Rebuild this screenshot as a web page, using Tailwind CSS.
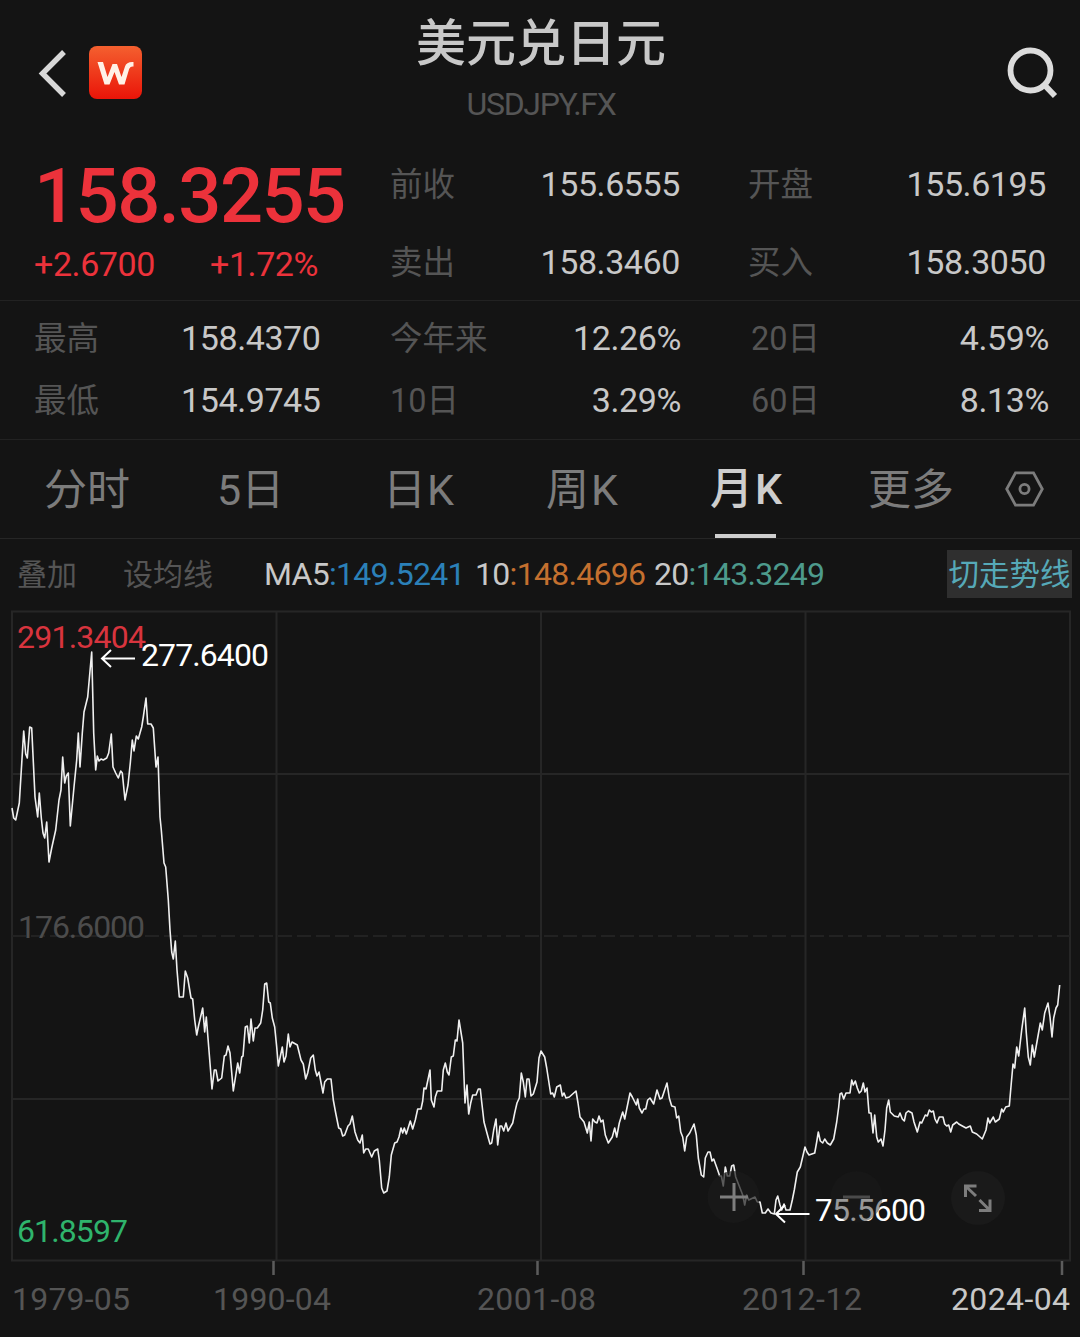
<!DOCTYPE html>
<html lang="zh-CN">
  <head>
    <meta charset="UTF-8" />
    <meta name="viewport" content="width=device-width, initial-scale=1.0" />
    <script src="https://cdn.jsdelivr.net/npm/@tailwindcss/browser@4"></script>
    <title>美元兑日元 USDJPY.FX</title>
  </head>
  <body class="bg-[#141414] w-[1080px] h-[1337px] overflow-hidden text-[#c8c8c8] whitespace-nowrap font-[Roboto,'Noto_Sans_CJK_SC',sans-serif]">
    <!-- Header -->
    <header class="h-[145px] grid grid-cols-[1fr_auto_1fr]">
      <div class="flex items-center h-[145px] pl-[38px] gap-[23px]">
        <svg class="w-7 h-12" viewBox="0 0 28 48" fill="none" stroke="#d8d8d8" stroke-width="5.400">
          <path d="M26 3 L4.500 24.500 L26 46" />
        </svg>
        <svg class="w-[53px] h-[53px]" viewBox="0 0 53 53">
          <defs>
            <linearGradient id="logo" x1="0" y1="0" x2="0" y2="1">
              <stop offset="0" stop-color="#f4602f" />
              <stop offset="1" stop-color="#ea1408" />
            </linearGradient>
          </defs>
          <rect width="53" height="53" rx="8" fill="url(#logo)" />
          <path d="M8.500 16 H14 L18.500 31 L23.500 18 H28 L32.500 31 L36 20.500 Q37.500 15.500 44.500 16 V20.500 Q41 20 40 23.500 L35.500 38.500 H30 L25.500 26 L20.500 38.500 H15.500 Z" fill="#fff1e6" />
        </svg>
      </div>
      <div class="text-center">
        <h1 class="text-[50px] leading-[60px] font-medium pt-[14px] pl-[2px]">美元兑日元</h1>
        <p class="text-[32px] leading-[40px] tracking-[-1.3px] text-[#555] mt-[10px] pl-[2px]">USDJPY.FX</p>
      </div>
      <div class="flex items-center justify-end h-[146px] pr-[21px]">
        <svg class="w-[52px] h-[52px]" viewBox="0 0 52 52" fill="none" stroke="#dcdcdc" stroke-width="5.800">
          <circle cx="23.500" cy="23.500" r="20" />
          <path d="M37.500 38 L48 49" />
        </svg>
      </div>
    </header>

    <!-- Quote -->
    <section class="h-[156px] flex border-b border-[#222]">
      <div class="w-[390px] pl-[34px] text-[#ec323b]">
        <div class="text-[76px] leading-[80px] tracking-[-1.6px] font-medium pt-[11px]">158.3255</div>
        <div class="flex text-[34px] leading-[40px] tracking-[-0.4px] pt-2">
          <span class="w-[176px]">+2.6700</span>
          <span>+1.72%</span>
        </div>
      </div>
      <div class="text-[34px] leading-[78px] tracking-[-0.4px]">
        <div class="flex h-[78px]">
          <span class="w-[150px] pt-px text-[32.500px] text-[#555] tracking-normal">前收</span>
          <span class="w-[140px] text-right">155.6555</span>
          <span class="w-[150px] pt-px ml-[68px] text-[32.500px] text-[#555] tracking-normal">开盘</span>
          <span class="w-[148px] text-right">155.6195</span>
        </div>
        <div class="flex h-[77px]">
          <span class="w-[150px] pt-px text-[32.500px] text-[#555] tracking-normal">卖出</span>
          <span class="w-[140px] text-right">158.3460</span>
          <span class="w-[150px] pt-px ml-[68px] text-[32.500px] text-[#555] tracking-normal">买入</span>
          <span class="w-[148px] text-right">158.3050</span>
        </div>
      </div>
    </section>

    <section class="h-[139px] pt-[7px] pl-[34px] border-b border-[#222] text-[34px] leading-[61px] tracking-[-0.4px]">
      <div class="flex">
        <span class="w-[147px] pt-px text-[32.500px] text-[#555] tracking-normal">最高</span>
        <span class="w-[138px] text-right">158.4370</span>
        <span class="w-[150px] pt-px ml-[71px] text-[32.500px] text-[#555] tracking-normal">今年来</span>
        <span class="w-[141px] text-right">12.26%</span>
        <span class="w-[150px] pt-px ml-[70px] text-[32.500px] text-[#555] tracking-normal">20日</span>
        <span class="w-[148px] text-right">4.59%</span>
      </div>
      <div class="flex">
        <span class="w-[147px] pt-px text-[32.500px] text-[#555] tracking-normal">最低</span>
        <span class="w-[138px] text-right">154.9745</span>
        <span class="w-[150px] pt-px ml-[71px] text-[32.500px] text-[#555] tracking-normal">10日</span>
        <span class="w-[141px] text-right">3.29%</span>
        <span class="w-[150px] pt-px ml-[70px] text-[32.500px] text-[#555] tracking-normal">60日</span>
        <span class="w-[148px] text-right">8.13%</span>
      </div>
    </section>

    <!-- Period tabs -->
    <nav class="h-[99px] flex items-center pl-[44px] border-b border-[#262626] text-[43px] leading-[98px] text-[#7c7c7c]">
      <span class="w-[173px] pt-px">分时</span>
      <span class="w-[166px] pt-px">5日</span>
      <span class="w-[163px] pt-px tracking-[1px]">日K</span>
      <span class="w-[164px] pt-px tracking-[2px]">周K</span>
      <span class="w-[158px] relative font-medium tracking-[2px] text-[#cecece]">
        月K
        <i class="absolute left-[5px] bottom-0 w-[61px] h-1 bg-[#cecece]"></i>
      </span>
      <span class="w-[137px] pt-px">更多</span>
      <svg class="w-[39px] h-[36px]" viewBox="0 0 39 36" fill="none" stroke="#7c7c7c" stroke-width="2.800">
        <path d="M10.500 1.800 H28.500 L37.300 18 L28.500 34.200 H10.500 L1.700 18 Z" />
        <circle cx="19.500" cy="18" r="4.600" />
      </svg>
    </nav>

    <!-- Moving averages -->
    <div class="h-[70px] flex items-center pl-[17px] pr-2 text-[30px] leading-[48px] text-[#555]">
      <span class="w-[106px] pt-[2px]">叠加</span>
      <span class="w-[141px] pt-[2px]">设均线</span>
      <div class="text-[32px] tracking-[-0.7px] flex">
        <span class="w-[211px] text-[#2b80b8]"><b class="font-normal text-[#c8c8c8]">MA5</b>:149.5241</span>
        <span class="w-[179px] text-[#c4702f]"><b class="font-normal text-[#c8c8c8]">10</b>:148.4696</span>
        <span class="text-[#4d9a8c]"><b class="font-normal text-[#c8c8c8]">20</b>:143.3249</span>
      </div>
      <button class="ml-auto w-[125px] h-[48px] pt-px bg-[#2f2f2f] text-[#56a9b8] text-[30.500px]">切走势线</button>
    </div>

    <!-- Monthly chart -->
    <svg class="block w-[1080px] h-[728px]" viewBox="0 609 1080 728" font-size="32">
      <g fill="none" stroke="#262626" stroke-width="2">
        <rect x="12" y="611.500" width="1058" height="649" />
        <path d="M276.500 611V1260M541 611V1260M805.500 611V1260M12 774H1070M12 1099H1070" />
        <path d="M12 936H1070" stroke="#222" stroke-dasharray="14 5" />
      </g>
      <path d="M273.500 1261V1275M537.500 1261V1275M803.500 1261V1275M1062 1261V1275" stroke="#5c5c5c" stroke-width="2.500" />

      <g>
        <text x="17" y="648" textLength="129" fill="#d8343e">291.3404</text>
        <text x="18" y="938" textLength="127" fill="#4c4c4c">176.6000</text>
        <text x="17" y="1242" textLength="111" fill="#2fb46c">61.8597</text>
      </g>

      <polyline fill="none" stroke="#f0f0f0" stroke-width="1.600" stroke-linejoin="round" points="12,808 13.7,818 15.7,820 19.3,803 23.7,731 25.7,754 27.3,758 29.7,727 31.7,728 35,797 37.7,817 39.3,793 41.3,818 43,833 44.7,838 46.7,822 49,862 51.7,848 55.7,830 59,800 61,790 62.7,757 64.7,783 66.3,776 68.3,773 70.3,826 74,787 76.7,760 78.3,733 80,767 82.3,733 84,712 87.7,697 91.7,652 93.7,733 95.7,770 97.3,756 99,761 101,759 103.3,760 106.7,758 108.7,753 111.3,734 113,767 115.7,773 118.3,778 120.7,771 122.3,773 125,800 128,785 130.3,763 132.3,740 134,751 136.3,736 138.3,739 141.7,727 143.3,717 146,698 147.7,724 151,724 153.3,728 156,767 158,757 160,817 161.3,830 164,863 165.7,867 168.3,900 170,930 171.7,952 173.3,959 175.3,941 177,970 179.3,997 183.3,997 185.3,971 187.7,978 191,998 192.7,999 194.7,1020 196.7,1035 198.7,1025 202.7,1008 204.7,1032 206.3,1017 208.7,1047 210.3,1067 212,1089 214.3,1070 216,1070 218,1081 221.7,1078 224.3,1056 226,1055 228,1046 230,1053 233.3,1091 237.7,1063 239.7,1073 241.7,1057 243,1056 245.3,1027 247.3,1026 249.3,1043 251,1019 253.3,1041 255,1028 257.3,1028 260.7,1023 262.7,1010 264.7,984 266.7,983 268.7,1002 270.3,1003 272.3,1018 274.7,1027 276.7,1047 278.3,1066 282.3,1047 284,1062 286,1056 288.3,1034 290,1047 292,1042 297.3,1045 301,1060 303.3,1064 305.7,1079 307.7,1073 310.7,1058 313.3,1055 315.3,1070 317,1076 319,1072 323,1093 324.7,1082 327.3,1079 331,1079 333.3,1100 335.7,1113 338.7,1128 340.7,1129 342.7,1136 344.7,1135 348,1126 350,1124 352.3,1116 355,1132 357.7,1140 360,1143 362.3,1135 363.7,1153 365.7,1149 368.3,1149 371.7,1157 374.3,1151 377.7,1149 379.3,1160 381.7,1188 383.7,1193 387,1191 389.3,1177 391.3,1155 394.7,1143 397,1142 399,1137 401,1128 402.7,1133 404.3,1128 406.3,1134 410.3,1121 412.7,1129 415.3,1120 417.7,1109 421,1109 422.7,1101 424,1088 426,1089 430,1070 431.3,1100 434,1107 435.3,1097 437.3,1091 441.7,1091 443.3,1070 445.3,1063 447.3,1072 449,1075 451.3,1057 453.3,1056 455.3,1040 457,1041 459,1020 462.7,1043 464,1077 465,1103 467,1085 468.7,1114 470.7,1103 472.7,1095 476,1095 478.3,1089 480.3,1089 481.7,1102 484,1122 488.3,1138 490,1144 491.7,1143 493.7,1130 496,1119 497.7,1145 500,1126 501.7,1126 503.7,1131 506,1123 508,1131 512.7,1123 514.7,1113 517,1103 519.3,1098 521.3,1073 523.3,1082 525.3,1097 527,1079 529,1079 531,1096 533.3,1094 537,1082 539,1058 541,1051 544.7,1057 546.7,1068 550.7,1094 552.7,1093 554.3,1097 556.7,1087 560.3,1085 562.3,1096 564,1093 566,1098 569.3,1097 576,1091 578,1103 580,1117 584,1122 587.3,1133 589.3,1122 591,1141 592.7,1119 595,1122 597,1123 599,1116 601,1122 603,1120 605.3,1135 608.3,1143 612.3,1137 614.7,1128 616.7,1137 619.3,1123 622.7,1112 624.7,1119 630,1093 632.3,1097 636.3,1105 637.7,1099 639.3,1108 642,1113 644,1109 645.7,1109 647.7,1100 650,1098 653.7,1104 657,1090 660,1099 662,1098 667,1083 669.3,1098 671.7,1106 675,1107 676.7,1118 678.7,1116 680.7,1132 682.7,1137 684.7,1151 686.7,1137 689.7,1133 694,1124 696.3,1135 698.3,1158 701.3,1175 703.7,1177 705.3,1158 708,1152 710,1152 712,1161 713.7,1159 717.3,1169 719.7,1176 721.3,1176 723.3,1186 725.3,1167 727.3,1176 729.7,1176 731.7,1166 733.7,1165 735.7,1177 740,1188 742.7,1195 744.7,1205 746.7,1195 748.7,1200 755,1197 757.3,1202 760,1202 762.3,1213 765.3,1213 768,1209 771,1213 774.3,1214 776,1200 777.7,1196 780,1205 781.7,1210 784,1204 786,1210 790,1210 792.3,1200 794.3,1190 797.3,1172 800.3,1167 805,1147 807,1152 809,1155 814.7,1153 816.7,1142 818.3,1132 820.3,1141 822.7,1143 824.7,1139 827.3,1143 830.3,1145 833.7,1139 836.7,1122 838.7,1107 840,1094 841.7,1093 843.7,1099 846,1093 850,1093 851.7,1080 853.3,1085 855.3,1081 857.3,1088 859.3,1093 861.3,1091 863.3,1083 865,1092 867,1088 869,1113 871,1113 873,1133 874.7,1115 876.7,1137 878.3,1142 881,1139 883,1146 885,1130 886.7,1108 888.7,1100 890.3,1112 894.3,1116 898.3,1117 900,1113 902.3,1119 904.3,1121 906,1113 908.3,1111 912,1113 914,1122 917.3,1132 920,1122 921.7,1123 925.3,1115 927.3,1116 929.3,1110 931.3,1112 933.3,1111 935,1119 937,1123 939.3,1117 943,1117 944.7,1124 946.7,1126 948.7,1125 950.7,1132 952.7,1125 956.7,1122 958.7,1124 966,1128 970.3,1126 972.3,1132 976.7,1134 982.3,1139 986,1130 988,1118 989.7,1123 993.3,1117 995.3,1122 999.3,1119 1001.7,1109 1003.3,1112 1005.7,1107 1009.3,1106 1011.3,1083 1013,1064 1014.7,1068 1016.7,1047 1018.7,1056 1021.7,1030 1024.7,1008 1026.3,1033 1028.3,1057 1030.3,1065 1032.3,1045 1034.3,1057 1037.3,1040 1040.3,1023 1042.3,1030 1044.7,1013 1048,1003 1050,1017 1052,1037 1053.7,1018 1056,1008 1057.7,1005 1059.7,985" />

      <!-- High and low markers -->
      <g fill="none" stroke="#fff" stroke-width="2">
        <path d="M135 658.500H102M111 650L102 658.500L111 667" />
        <path d="M809.500 1214H777M785 1205L776 1214L785 1222.500" />
      </g>
      <text x="141" y="666" textLength="128" fill="#fff">277.6400</text>
      <text x="815" y="1221" textLength="111" fill="#fff">75.5600</text>

      <!-- Zoom controls -->
      <g fill="#1a1a1a">
        <circle cx="733.500" cy="1197" r="26" fill-opacity="0.700" />
        <circle cx="856.500" cy="1197" r="26" fill-opacity="0.450" />
        <circle cx="978" cy="1198" r="27" />
      </g>
      <g fill="none" stroke="#7d7d7d" stroke-width="3">
        <path d="M720 1197H748M734 1183V1211" />
        <path d="M843 1197H870" stroke="#4a4a4a" />
        <path d="M965.500 1197V1186H976.500M966 1186.500L976 1196M990 1199.500V1210.500H979M989.500 1210L979.500 1200" />
      </g>

      <g fill="#555">
        <text x="12" y="1310" textLength="118">1979-05</text>
        <text x="213" y="1310" textLength="118">1990-04</text>
        <text x="477" y="1310" textLength="119">2001-08</text>
        <text x="742" y="1310" textLength="120">2012-12</text>
        <text x="951" y="1310" textLength="119" fill="#c8c8c8">2024-04</text>
      </g>
    </svg>
  </body>
</html>
